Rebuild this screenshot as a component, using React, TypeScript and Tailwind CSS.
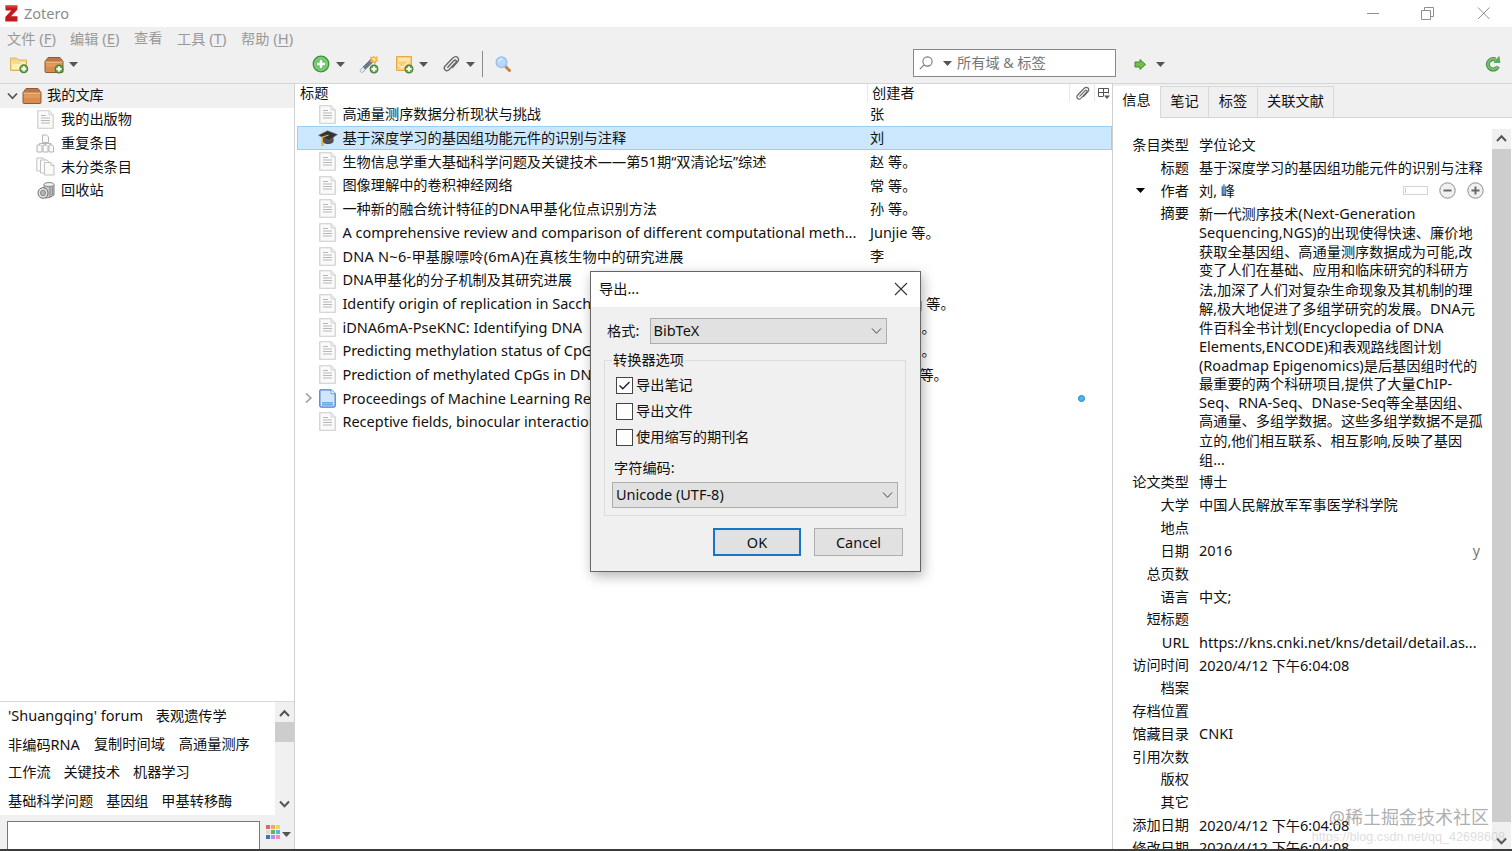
import type { ReactNode } from "react";

const CJK = "font-['Noto_Sans','Noto_Sans_CJK_SC',sans-serif]";

/* Latin runs are set slightly larger than the Chinese text around them. */
function Mix({ text }: { text: string }) {
  return (
    <span>
      {text.split(/([\x20-\x7e]+)/).map((part, i) =>
        i % 2 ? <span key={i} className="text-[14.5px]">{part}</span> : part,
      )}
    </span>
  );
}

function DocIcon({ className = "" }: { className?: string }) {
  return (
    <svg className={"shrink-0 " + className} width="17" height="19" viewBox="0 0 17 19">
      <path d="M.8.8h11.200l4.200 4.200v13.200H.8z" fill="#fafafa" stroke="#cacaca" strokeWidth="1.100" />
      <path d="M12 .8v4.200h4.200" fill="#ececec" stroke="#d6d6d6" />
      <path d="M4 5.500h5M4 8h9M4 10.500h9M4 13h9" stroke="#b8b8b8" strokeWidth="1.100" />
    </svg>
  );
}

function BlueDocIcon() {
  return (
    <svg className="shrink-0" width="17" height="19" viewBox="0 0 17 19">
      <path d="M1.500.8h10.500l4.200 4v12.200l-1.200 1.200H2L.8 17V1.500z" fill="#d3e5fb" stroke="#4a80cf" strokeWidth="1.300" />
      <path d="M12 .8v4h4.200" fill="#fff" stroke="#6b9ae0" />
      <path d="M3 13.800h11M3 15.800h11" stroke="#4a9be0" strokeWidth="1.200" />
    </svg>
  );
}

function CapIcon() {
  return (
    <svg className="shrink-0" width="20" height="19" viewBox="0 0 20 19">
      <path d="M4.500 8v6c2.500 2.800 9 2.600 11 0V8z" fill="#4d4d4d" />
      <path d="M.5 7.300 9.500 2.700l10 3.800-9 6z" fill="#333" stroke="#777" strokeWidth=".6" />
      <path d="M10.500 7 4.200 9.300v5" fill="none" stroke="#e2ac3c" strokeWidth="1.300" />
      <path d="M3 13.200h2.300l.6 4.800H3.400z" fill="#e8b440" />
    </svg>
  );
}

function Plus({ x, y }: { x: number; y: number }) {
  return (
    <g transform={`translate(${x} ${y})`}>
      <circle r="3.900" fill="#6fae58" stroke="#3f7f30" strokeWidth="1.100" />
      <path d="M-2.500 0h5M0-2.500v5" stroke="#fff" strokeWidth="2" />
    </g>
  );
}

function FolderPlus() {
  return (
    <svg width="20" height="18" viewBox="0 0 20 18">
      <path d="M1.500 14.500V2h6L9 4h8.500v10.500z" fill="#f6dc8b" stroke="#dcb458" />
      <path d="M3 6h13v7H3z" fill="#fdf0b8" />
      <path d="M3.500 7h8M3 4h4" stroke="#e9c970" />
      <Plus x={14.800} y={12.800} />
    </svg>
  );
}

function Box({ plus = false }: { plus?: boolean }) {
  return (
    <svg className="shrink-0" width="20" height="18" viewBox="0 0 20 18">
      <path d="M4 1.500h12L19 5.500v10q0 1-1 1H2q-1 0-1-1v-10z" fill="#d98c4d" stroke="#935a30" />
      <path d="M4.300 2h11.400l2.300 3.500H2z" fill="#b3794a" />
      <path d="M1.700 6.300h16.600" stroke="#f0b982" strokeWidth="1.200" />
      <path d="M2.200 7.500h15.600v3.500H2.200z" fill="#e19a5c" />
      {plus && <Plus x={15} y={13} />}
    </svg>
  );
}

function Caret({ className = "text-[#555]" }: { className?: string }) {
  return (
    <svg className={"shrink-0 " + className} width="9" height="5" viewBox="0 0 9 5">
      <path d="M0 0h9L4.500 5z" fill="currentColor" />
    </svg>
  );
}

function Clip({ size = 18 }: { size?: number }) {
  return (
    <svg className="shrink-0" width={size} height={size} viewBox="0 0 18 18" fill="none" stroke="#686868" strokeWidth="1.400" strokeLinecap="round">
      <path d="M5.800 12.200 12 5.600q1.200-1 2-.2t-.2 2L7.300 14.500q-2.200 2.200-4.200.5-1.900-2 .2-4.200L10.800 3q2.600-2.400 4.800-.6 2 2.200-.2 4.700L10.500 12.500" />
    </svg>
  );
}

function Chevron({ dir, className = "" }: { dir: "up" | "down" | "right"; className?: string }) {
  const d = dir === "up" ? "M1 7 5.500 2.200 10 7" : dir === "down" ? "M1 2.500 5.500 7.300 10 2.500" : "M3 .5 7.800 5 3 9.500";
  return (
    <svg className={"shrink-0 " + className} width="11" height="10" viewBox="0 0 11 10" fill="none" stroke="currentColor">
      <path d={d} />
    </svg>
  );
}

const items: { t: string; c: string; kind?: "cap" | "blue"; wide?: boolean }[] = [
  { t: "高通量测序数据分析现状与挑战", c: "张" },
  { t: "基于深度学习的基因组功能元件的识别与注释", c: "刘", kind: "cap" },
  { t: "生物信息学重大基础科学问题及关键技术——第51期“双清论坛”综述", c: "赵 等。" },
  { t: "图像理解中的卷积神经网络", c: "常 等。" },
  { t: "一种新的融合统计特征的DNA甲基化位点识别方法", c: "孙 等。" },
  { t: "A comprehensive review and comparison of different computational meth...", c: "Junjie 等。" },
  { t: "DNA N~6-甲基腺嘌呤(6mA)在真核生物中的研究进展", c: "李", wide: true },
  { t: "DNA甲基化的分子机制及其研究进展", c: "" },
  { t: "Identify origin of replication in Sacch", c: "Huiying 等。" },
  { t: "iDNA6mA-PseKNC: Identifying DNA", c: "Feng 等。" },
  { t: "Predicting methylation status of CpG", c: "Feng 等。" },
  { t: "Prediction of methylated CpGs in DN", c: "Kumar 等。" },
  { t: "Proceedings of Machine Learning Re", c: "", kind: "blue" },
  { t: "Receptive fields, binocular interaction", c: "" },
];

const abstractLines = [
  "新一代测序技术(Next-Generation",
  "Sequencing,NGS)的出现使得快速、廉价地",
  "获取全基因组、高通量测序数据成为可能,改",
  "变了人们在基础、应用和临床研究的科研方",
  "法,加深了人们对复杂生命现象及其机制的理",
  "解,极大地促进了多组学研究的发展。DNA元",
  "件百科全书计划(Encyclopedia of DNA",
  "Elements,ENCODE)和表观路线图计划",
  "(Roadmap Epigenomics)是后基因组时代的",
  "最重要的两个科研项目,提供了大量ChIP-",
  "Seq、RNA-Seq、DNase-Seq等全基因组、",
  "高通量、多组学数据。这些多组学数据不是孤",
  "立的,他们相互联系、相互影响,反映了基因",
  "组...",
];

const fields: [string, string][] = [
  ["论文类型", "博士"],
  ["大学", "中国人民解放军军事医学科学院"],
  ["地点", ""],
  ["日期", "2016"],
  ["总页数", ""],
  ["语言", "中文;"],
  ["短标题", ""],
  ["URL", "https://kns.cnki.net/kns/detail/detail.as..."],
  ["访问时间", "2020/4/12 下午6:04:08"],
  ["档案", ""],
  ["存档位置", ""],
  ["馆藏目录", "CNKI"],
  ["引用次数", ""],
  ["版权", ""],
  ["其它", ""],
  ["添加日期", "2020/4/12 下午6:04:08"],
  ["修改日期", "2020/4/12 下午6:04:08"],
];

function Field({ label, children }: { label: string; children?: ReactNode }) {
  return (
    <div className="flex h-[22.85px] shrink-0 items-center leading-[22px]">
      <div className="w-[76px] shrink-0 text-right"><Mix text={label} /></div>
      <div className="ml-[10px] flex flex-1 items-center">{children}</div>
    </div>
  );
}

function Menu({ label, k, className }: { label: string; k?: string; className: string }) {
  return (
    <span className={className}>
      {label}
      {k && <span className="text-[14.8px]"> (<u className="underline-offset-2">{k}</u>)</span>}
    </span>
  );
}

function TitleBar() {
  return (
    <div className="flex h-[27px] items-center bg-white">
      <svg className="mb-px ml-[5px]" width="13" height="17" viewBox="0 0 13 17">
        <path d="M.5.5h11.800v4.300L6 11.300h6.500v5.200H.3v-4.600L6.300 5.500H.5z" fill="#c3191d" />
        <path d="M.5.5h11.800v2H.5z" fill="#dc3a38" />
      </svg>
      <span className="mb-[2px] ml-[6px] text-[14.500px] text-[#8c8c8c]">Zotero</span>
      <svg className="mb-[2px] ml-auto mr-[22px]" width="124" height="14" viewBox="0 0 124 14" fill="none" stroke="#8f8f8f">
        <path d="M1 7.500h12M55.500 4.500h9v9h-9zM58.500 4.500v-3h9v9h-3M112 1.500l11.500 11.500M123.500 1.500 112 13" />
      </svg>
    </div>
  );
}

function Toolbar() {
  return (
    <div className="flex h-[34px] items-center pb-[5px] pt-[1px]">
      <div className="flex w-[312px] items-center pl-[9px] pt-[1px]">
        <FolderPlus />
        <span className="w-[15px]" />
        <Box plus />
        <Caret className="ml-[5px] text-[#555]" />
      </div>
      <svg width="18" height="18" viewBox="0 0 18 18">
        <circle cx="9" cy="9" r="7.800" fill="#5cb85a" stroke="#3a963b" strokeWidth="1.300" />
        <circle cx="9" cy="9" r="6.300" fill="#72c46c" stroke="#a0d99b" strokeWidth=".8" />
        <path d="M9 5v8M5 9h8" stroke="#fff" strokeWidth="2.300" />
      </svg>
      <Caret className="ml-[6px] text-[#555]" />
      <svg className="ml-[14px]" width="20" height="19" viewBox="0 0 20 19">
        <path d="M1 15 12 4l2.500 2.500L3.500 17q-2 1-2.500-2z" fill="#6f7984" stroke="#5a6470" strokeWidth=".7" />
        <path d="M1 15l3-3 2 2.500L3.500 17q-2 1-2.500-2z" fill="#e6ebf0" />
        <path d="m10.500 1.500 2.500.5L14.500.5 16 2l3-.8-.8 2.800L19.500 6 17 7l-.5 2.500L14 7.500 11 7l1-2.500z" fill="#f6b73c" />
        <path d="m13 3.500 2-.8 1.500 1.500-.8 2z" fill="#fff3c4" />
        <Plus x={15} y={14} />
      </svg>
      <svg className="ml-[16px]" width="19" height="19" viewBox="0 0 19 19">
        <path d="M1.500 1.500h15v14h-15z" fill="#f9cf73" stroke="#e8a845" />
        <path d="M3 3h12v3.500H3z" fill="#fde6ad" />
        <path d="m3 9 3.500 4L10 10l4-3" fill="none" stroke="#fff0c9" strokeWidth="1.300" />
        <Plus x={14} y={14} />
      </svg>
      <Caret className="ml-[5px] text-[#555]" />
      <span className="ml-[14px] flex"><Clip /></span>
      <Caret className="ml-[6px] text-[#555]" />
      <span className="ml-[7px] h-[26px] w-px bg-[#8a8a8a]" />
      <svg className="ml-[12px]" width="17" height="17" viewBox="0 0 17 17">
        <path d="m10.500 10.500 4 4" stroke="#c9813f" strokeWidth="3" strokeLinecap="round" />
        <circle cx="6.500" cy="6.300" r="5.300" fill="#b6dafa" stroke="#9dbfe6" strokeWidth="1.400" />
        <path d="M3.500 5.500q1-2.500 3.500-2.500" stroke="#fff" fill="none" />
      </svg>
      <div className="mb-[2px] ml-[401px] flex h-[28px] w-[203px] items-center border border-[#888] bg-white text-[14.200px] text-[#757575]">
        <svg className="ml-[5px]" width="14" height="14" viewBox="0 0 14 14" fill="none" stroke="#777" strokeWidth="1.100">
          <circle cx="8.500" cy="5.500" r="4.600" />
          <path d="M5.200 8.800.8 13.200" />
        </svg>
        <Caret className="ml-[10px] text-[#555]" />
        <span className="mb-px ml-[5px] leading-[20px]">所有域 &amp; 标签</span>
      </div>
      <svg className="ml-[18px]" width="13" height="13" viewBox="0 0 13 13">
        <path d="M1 4h5V1.500l5.500 5-5.500 5V9H1z" fill="#73bd4b" stroke="#458a2c" />
      </svg>
      <Caret className="ml-[9px] text-[#555]" />
      <svg className="ml-auto mr-[11px]" width="16" height="16" viewBox="0 0 16 16" fill="none">
        <path d="M13 10.500A5.300 5.300 0 1 1 10.500 3.500" stroke="#3f8f45" strokeWidth="4" />
        <path d="M12.800 10.500A5.200 5.200 0 1 1 10.500 3.500" stroke="#79bd6c" strokeWidth="2.400" />
        <path d="M9 6.500 15 6.500 14 .5z" fill="#5cad58" stroke="#3f8f45" strokeWidth=".6" />
      </svg>
    </div>
  );
}

function LeftPane() {
  const rows: [string, ReactNode][] = [
    ["我的出版物", <DocIcon key="a" />],
    ["重复条目", (
      <svg key="b" width="19" height="19" viewBox="0 0 19 19" fill="#fafafa" stroke="#b5b5b5">
        <path d="M6.500 1h4l2 2v5.500h-6zM9.500 8.500V11M3.500 11V9.500H15V11M1 11h3.500L6 12.500V18H1zM7 11h3.500l1.500 1.500V18H7zM13 11h3l1.500 1.500V18H13z" />
      </svg>
    )],
    ["未分类条目", (
      <svg key="c" width="19" height="19" viewBox="0 0 19 19" fill="#fbfbfb" stroke="#c2c2c2">
        <path d="M.8 1h6.500l2 2v11H.8z" />
        <path d="M4.500 3h6.500l2 2v11H4.500z" />
        <path d="M8.500 5.500h6.500l3 3v9.500H8.500z" />
        <path d="M15 5.500v3h3" />
      </svg>
    )],
    ["回收站", (
      <svg key="d" width="18" height="19" viewBox="0 0 18 19">
        <path d="M7 3.500h10v10.500q-4 3.500-9 3z" fill="#c4c4c4" stroke="#808080" />
        <path d="M13 6v10M15.300 5.500v9" stroke="#777" strokeWidth=".8" />
        <ellipse cx="12" cy="3.500" rx="5" ry="2" fill="#f2f2f2" stroke="#888" />
        <ellipse cx="6" cy="12" rx="5" ry="5.300" fill="#e4e4e4" stroke="#707070" />
        <ellipse cx="6" cy="12" rx="2.500" ry="2.800" fill="#b5b5b5" stroke="#888" />
      </svg>
    )],
  ];
  return (
    <div className="flex w-[295px] shrink-0 flex-col border-r border-[#d2d2d2] bg-white">
      <div className="flex h-[23.600px] items-center bg-[#f0f0f0] pl-[7px]">
        <Chevron dir="down" className="text-[#555] [stroke-width:1.800]" />
        <span className="ml-[4px] flex"><Box /></span>
        <span className="mb-px ml-[5px]">我的文库</span>
      </div>
      {rows.map(([t, icon]) => (
        <div key={t} className="flex h-[23.650px] items-center pl-[36px]">
          <span className="flex w-[19px] justify-center">{icon}</span>
          <span className="ml-[6px]">{t}</span>
        </div>
      ))}
      <div className="mt-auto flex h-[114px] border-t border-[#d8d8d8]">
        <div className="-mt-[0.5px] flex-1 pl-[8px]">
          {[
            ["'Shuangqing' forum", "表观遗传学"],
            ["非编码RNA", "复制时间域", "高通量测序"],
            ["工作流", "关键技术", "机器学习"],
            ["基础科学问题", "基因组", "甲基转移酶"],
          ].map((r, i) => (
            <div key={r[0]} className={"flex h-[28.400px] items-center whitespace-nowrap " + (i === 1 ? "gap-[14px]" : "gap-[12.800px]")}>
              {r.map((x) => <Mix key={x} text={x} />)}
            </div>
          ))}
        </div>
        <div className="flex w-[19px] flex-col items-center bg-[#f0f0f0] text-[#555]">
          <div className="flex h-[20px] items-center pt-[3px]"><Chevron dir="up" className="[stroke-width:2]" /></div>
          <div className="h-[20px] w-full bg-[#cdcdcd]" />
          <div className="mt-auto pb-[6px]"><Chevron dir="down" className="[stroke-width:2]" /></div>
        </div>
      </div>
      <div className="flex h-[34px] items-end bg-[#f0f0f0] pl-[7px]">
        <div className="h-[28px] w-[253px] border border-b-0 border-[#777] bg-white" />
        <div className="mb-[10px] ml-[6px] grid grid-cols-3 gap-[1px]">
          {["bg-[#e8606a]", "bg-[#f2a65e]", "bg-[#f5d55c]", "bg-[#dbe4b0]", "bg-[#59b85d]", "bg-[#58b5e8]", "bg-[#4273b8]", "bg-[#b98ae0]", "bg-[#ef8fb4]"].map((c) => (
            <span key={c} className={"h-[4px] w-[4px] " + c} />
          ))}
        </div>
        <Caret className="mb-[12px] ml-[2px] text-[#555]" />
      </div>
    </div>
  );
}

function MiddlePane() {
  return (
    <div className="flex w-[818px] shrink-0 flex-col border-r border-[#cfcfcf] bg-white pl-[2px]">
      <div className="flex h-[18.500px] items-center pl-[3px] leading-[18px]">
        <span className="w-[567px]">标题</span>
        <span className="h-[18px] w-px bg-[#e8e8e8]" />
        <span className="w-[201px] pl-[4px]">创建者</span>
        <span className="flex h-[18px] w-[25px] items-center justify-center border-l border-[#e8e8e8]"><Clip size={15} /></span>
        <span className="flex h-[18px] items-center border-l border-[#e8e8e8] pl-[2px]">
          <svg width="13" height="13" viewBox="0 0 13 13" fill="none" stroke="#555">
            <path d="M6 9.500H1.500v-8h10v5M1.500 5.500h10M6.500 1.500v8" />
            <path d="M7 8.500h6L10 12z" fill="#555" stroke="none" />
          </svg>
        </span>
      </div>
      {items.map((it, i) => (
        <div key={it.t} className={"flex h-[23.650px] items-center whitespace-nowrap border pl-[5px] " + (i === 1 ? "border-[#99cff7] bg-[#cce8ff]" : "border-transparent")}>
          <span className="flex w-[12px]">{it.kind === "blue" && <Chevron dir="right" className="text-[#a0a0a0] [stroke-width:1.700]" />}</span>
          <span className="ml-[2px] flex w-[21px] justify-center">{it.kind === "cap" ? <CapIcon /> : it.kind === "blue" ? <BlueDocIcon /> : <DocIcon />}</span>
          <span className={"ml-[4.400px] w-[527.600px] " + (it.wide ? "tracking-[0.260px]" : "")}><Mix text={it.t} /></span>
          <span className="w-[208px]"><Mix text={it.c} /></span>
          {it.kind === "blue" && <span className="h-[7px] w-[7px] rounded-full border border-[#1c86c8] bg-[#4db4ee]" />}
        </div>
      ))}
    </div>
  );
}

function RightPane() {
  return (
    <div className="flex min-w-0 flex-1 flex-col bg-white">
      <div className="flex h-[34px] shrink-0 items-end border-b border-[#d5d5d5] bg-[#f0f0f0]">
        <div className="-mb-px flex h-[32px] w-[48px] items-center justify-center border-r border-[#d9d9d9] bg-white pb-[5px]">信息</div>
        {[["笔记", "w-[48px]"], ["标签", "w-[49px]"], ["关联文献", "w-[76px]"]].map(([t, w]) => (
          <div key={t} className={"flex h-[31px] items-center justify-center border-r border-t border-[#d9d9d9] pb-[2px] " + w}>{t}</div>
        ))}
      </div>
      <div className="flex min-h-0 flex-1 pt-[11px]">
        <div className="flex min-w-0 flex-1 flex-col whitespace-nowrap pt-[4.600px]">
          <Field label="条目类型">学位论文</Field>
          <Field label="标题">基于深度学习的基因组功能元件的识别与注释</Field>
          <div className="flex h-[23.600px] items-center">
            <Caret className="mb-px ml-[23px] text-black" />
            <span className="ml-[15.600px]">作者</span>
            <span className="ml-[10px]"><Mix text="刘, 峰" /></span>
            <span className="mb-px ml-auto h-[9px] w-[25px] border border-[#d4d4d4] bg-white py-px pl-px"><span className="block h-full w-px bg-[#ccc]" /></span>
            {["M4.500 8.500h8", "M4.500 8.500h8M8.500 4.500v8"].map((d, i) => (
              <svg key={d} className={i ? "mb-px ml-[11px] mr-[8px]" : "mb-px ml-[11px]"} width="17" height="17" viewBox="0 0 17 17">
                <circle cx="8.500" cy="8.500" r="7.700" fill="#f0f0f0" stroke="#8c8c8c" />
                <path d={d} stroke="#666" strokeWidth="1.900" />
              </svg>
            ))}
          </div>
          <div className="flex shrink-0 pb-[2px] pt-[2px] leading-[18.920px]">
            <div className="w-[76px] text-right">摘要</div>
            <div className="ml-[10px]">{abstractLines.map((l) => <div key={l} className="h-[18.920px]"><Mix text={l} /></div>)}</div>
          </div>
          {fields.map(([l, v]) => (
            <Field key={l} label={l}>
              <Mix text={v} />
              {l === "日期" && <span className="ml-auto mr-[12px] text-[#777]">y</span>}
            </Field>
          ))}
        </div>
        <div className="mr-px flex w-[19px] flex-col items-center bg-[#f0f0f0] text-[#555]">
          <div className="flex h-[20px] items-center"><Chevron dir="up" className="[stroke-width:2]" /></div>
          <div className="w-full flex-1 bg-[#cdcdcd]" />
          <div className="flex h-[27px] items-center pt-[10px]"><Chevron dir="down" className="[stroke-width:2]" /></div>
        </div>
      </div>
    </div>
  );
}

function Check({ label, on = false }: { label: string; on?: boolean }) {
  return (
    <div className="flex h-[26px] items-center">
      <span className="flex h-[17px] w-[17px] items-center justify-center border border-[#444] bg-white">
        {on && <svg width="13" height="11" viewBox="0 0 13 11" fill="none" stroke="#222" strokeWidth="1.400"><path d="m1.500 5.500 3.300 3.300L11.500 2" /></svg>}
      </span>
      <span className="ml-[3px]">{label}</span>
    </div>
  );
}

function ExportDialog() {
  return (
    <div className="absolute left-[590px] top-[271px] flex h-[301px] w-[331px] flex-col border border-[#666] bg-[#f0f0f0] shadow-[2px_4px_12px_rgba(0,0,0,0.3)]">
      <div className="flex h-[35px] items-center bg-white pb-[2px] pl-[8px]">
        <Mix text="导出..." />
        <svg className="ml-auto mr-[12px]" width="14" height="14" viewBox="0 0 14 14" stroke="#333" strokeWidth="1.100"><path d="m1 1 12 12M13 1 1 13" /></svg>
      </div>
      <div className="mt-[11px] flex items-center pl-[16px]">
        <span className="w-[42.500px] pb-px"><Mix text="格式:" /></span>
        <div className="flex h-[26px] w-[237px] items-center justify-between border border-[#adadad] bg-[#e1e1e1] pb-px pl-[3px] pr-[4px]">
          <Mix text="BibTeX" /><Chevron dir="down" className="text-[#444]" />
        </div>
      </div>
      <fieldset className="ml-[13px] mt-[4px] flex h-[168px] w-[302px] flex-col border border-[#dcdcdc] pl-[7px]">
        <legend className="h-[24px] px-[1px] leading-[24px]">转换器选项</legend>
        <div className="pl-[4px]">
          <Check label="导出笔记" on />
          <Check label="导出文件" />
          <Check label="使用缩写的期刊名" />
        </div>
        <span className="ml-[2px] mt-[6px] leading-[22px]"><Mix text="字符编码:" /></span>
        <div className="mt-[3px] flex h-[26px] w-[286px] shrink-0 items-center justify-between border border-[#adadad] bg-[#e1e1e1] pb-px pl-[3px] pr-[4px]">
          <Mix text="Unicode (UTF-8)" /><Chevron dir="down" className="text-[#444]" />
        </div>
      </fieldset>
      <div className="mt-[12px] flex justify-end gap-[13px] pr-[17px]">
        <div className="flex h-[28px] w-[88px] items-center justify-center border-2 border-[#1874c8] bg-[#e1e1e1] pb-px text-[14.500px]">OK</div>
        <div className="flex h-[28px] w-[89px] items-center justify-center border border-[#adadad] bg-[#e1e1e1] pb-px text-[14.500px]">Cancel</div>
      </div>
    </div>
  );
}

export default function App() {
  return (
    <div className={"relative flex h-[851px] w-[1512px] flex-col overflow-hidden bg-[#f0f0f0] text-[14.200px] leading-[22px] text-[#111] " + CJK}>
      <TitleBar />
      <div className="flex h-[22px] items-center pl-[7px] text-[#999]">
        <Menu label="文件" k="F" className="w-[63px]" />
        <Menu label="编辑" k="E" className="w-[64px]" />
        <Menu label="查看" className="w-[43px]" />
        <Menu label="工具" k="T" className="w-[64px]" />
        <Menu label="帮助" k="H" className="w-[64px]" />
      </div>
      <Toolbar />
      <div className="flex min-h-0 flex-1 border-t border-[#d5d5d5]">
        <LeftPane />
        <MiddlePane />
        <RightPane />
      </div>
      <div className="h-[2px] shrink-0 bg-[#3c3c3c]" />
      <ExportDialog />
      <div className="absolute right-[23px] top-[805px] text-[18px] leading-[24px] text-[#999]/80">@稀土掘金技术社区</div>
      <div className="absolute right-[7px] top-[829px] font-['Liberation_Sans',sans-serif] text-[12.600px] leading-[16px] text-[#bbb]/50">https://blog.csdn.net/qq_42698608</div>
    </div>
  );
}
